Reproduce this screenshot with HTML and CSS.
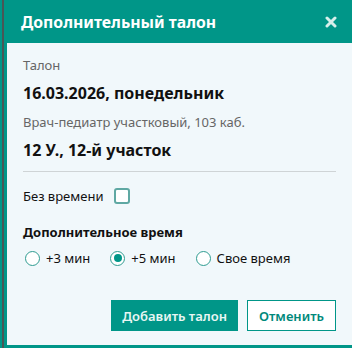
FILE: index.html
```html
<!DOCTYPE html>
<html lang="ru">
<head>
  <meta charset="UTF-8">
  <title>Дополнительный талон</title>
  <link rel="stylesheet" href="styles.css">
</head>
<body>
  <div class="shell">
    <div class="modal">
      <div class="modal-header">
        <span class="modal-title">Дополнительный талон</span>
        <svg class="modal-close" width="12" height="12" viewBox="0 0 12 12">
          <path d="M2 2 L10 10 M10 2 L2 10" stroke="#d6efeb" stroke-width="3" stroke-linecap="round"/>
        </svg>
      </div>
      <div class="modal-body">
        <div class="label">Талон</div>
        <div class="value">16.03.2026, понедельник</div>
        <div class="label">Врач-педиатр участковый, 103 каб.</div>
        <div class="value">12 У., 12-й участок</div>

        <hr class="divider">

        <label class="no-time">
          Без времени
          <span class="checkbox"></span>
        </label>

        <div class="section-title">Дополнительное время</div>
        <div class="radios">
          <label class="radio"><span class="dot"></span>+3 мин</label>
          <label class="radio"><span class="dot checked"></span>+5 мин</label>
          <label class="radio"><span class="dot"></span>Свое время</label>
        </div>

        <div class="actions">
          <button class="btn btn-primary">Добавить талон</button>
          <button class="btn btn-outline">Отменить</button>
        </div>
      </div>
    </div>
  </div>
</body>
</html>
```

FILE: styles.css
```css
body {
  margin: 0;
  padding-left: 2px;
  background: #009688;
  font-family: "Noto Sans", Arial, sans-serif;
  height: 348px;
  overflow: hidden;
}

.shell {
  border-left: 2px solid #4a5656;
  height: 348px;
}

.modal {
  border-left: 3px solid #009688;
  border-bottom: 3px solid #009688;
  background: #f1f8fb;
  box-sizing: border-box;
  height: 348px;
}

.modal-header {
  background: #009688;
  height: 43px;
  margin-left: -3px;
  padding: 0 15px 0 17px;
  display: flex;
  align-items: center;
  justify-content: space-between;
}

.modal-title {
  color: #fff;
  font-size: 15.8px;
  font-weight: 700;
}

.modal-close {
  display: block;
}

.modal-body {
  padding: 14px 16px 0 16px;
}

.label {
  color: #666;
  font-size: 13px;
  line-height: 17px;
}

.value {
  color: #111;
  font-size: 16px;
  font-weight: 700;
  line-height: 20px;
  margin: 9px 0 11px;
}

.divider {
  border: none;
  border-top: 1px solid #cfd4d6;
  margin: 8px 0 0;
}

.no-time {
  display: flex;
  align-items: center;
  gap: 11px;
  font-size: 13px;
  color: #111;
  margin-top: 15px;
}

.checkbox {
  width: 12px;
  height: 12px;
  border: 2px solid #5fa8a3;
  border-radius: 3px;
  background: #fff;
}

.section-title {
  font-size: 13px;
  font-weight: 700;
  color: #111;
  margin-top: 18px;
}

.radios {
  display: flex;
  gap: 20px;
  margin-top: 8px;
  margin-left: 2px;
}

.radio {
  display: flex;
  align-items: center;
  gap: 6px;
  font-size: 13px;
  color: #111;
}

.dot {
  width: 13px;
  height: 13px;
  border: 1px solid #2f9c91;
  border-radius: 50%;
  background: #fff;
  position: relative;
}

.dot.checked::after {
  content: "";
  position: absolute;
  left: 2.5px;
  top: 2.5px;
  width: 8px;
  height: 8px;
  border-radius: 50%;
  background: #009688;
}

.actions {
  display: flex;
  justify-content: flex-end;
  gap: 9px;
  margin-top: 33px;
}

.btn {
  font-family: "Noto Sans", Arial, sans-serif;
  font-size: 13px;
  font-weight: 600;
  height: 31px;
  padding: 0 11px;
  border-radius: 0;
  cursor: pointer;
}

.btn-primary {
  background: #009688;
  color: #e8f6f4;
  border: 1px solid #009688;
  padding: 0 10px;
}

.btn-outline {
  background: #fff;
  color: #00897b;
  border: 1px solid #009688;
}
```
